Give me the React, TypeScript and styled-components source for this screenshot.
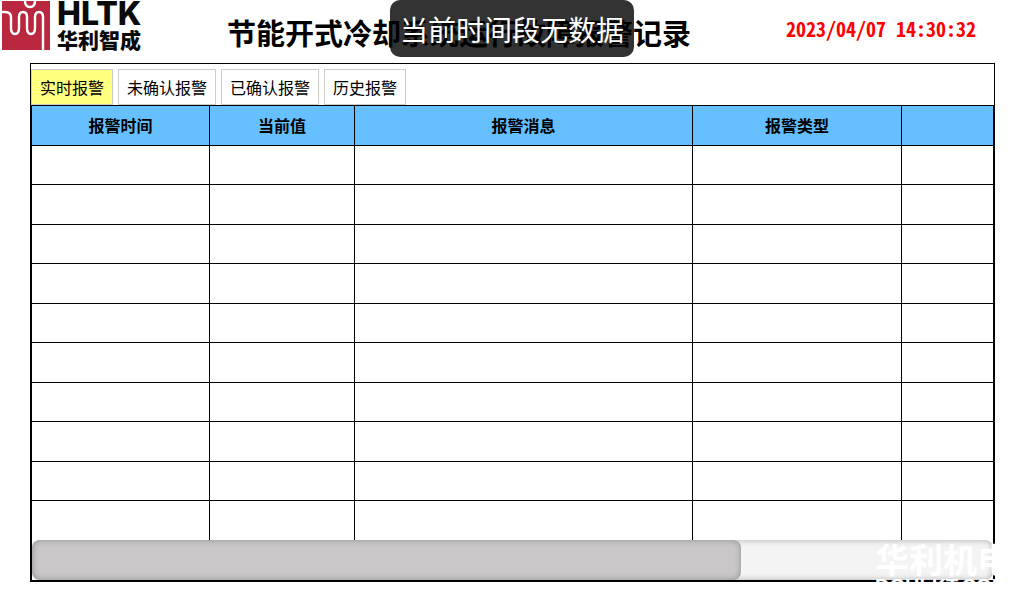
import React, { useState } from "react";
import styled, { createGlobalStyle } from "styled-components";

const GlobalStyle = createGlobalStyle`
  *, *::before, *::after { box-sizing: border-box; }
  body {
    margin: 0;
    background: #fff;
    color: #000;
    font-family: "Noto Sans CJK SC", "Noto Sans", sans-serif;
    font-size: 16px;
  }
`;

const Page = styled.div`
  position: relative;
  overflow: hidden;
  padding-bottom: 18px;
`;

const Header = styled.header`
  display: flex;
  align-items: flex-start;
  height: 63px;
`;

const Logo = styled.div`
  display: flex;
  gap: 7px;
  width: 225px;
  padding-left: 2px;
`;

const LogoText = styled.div`
  display: flex;
  flex-direction: column;
  color: #0a0a0a;
`;

const LogoLatin = styled.span`
  font: 800 32px/28px Inter, sans-serif;
`;

const LogoHan = styled.span`
  font-size: 21px;
  font-weight: 900;
  line-height: 22px;
`;

const Title = styled.h1`
  flex: 1;
  margin: 0;
  padding: 12px 0 0 2px;
  font-size: 29px;
  font-weight: 700;
  line-height: 40px;
  white-space: nowrap;
`;

const Clock = styled.time`
  padding: 14px 48px 0 0;
  color: #f00;
  font-size: 20px;
  font-weight: 700;
  font-feature-settings: "hwid";
  line-height: 30px;
  white-space: pre;
`;

const Frame = styled.main`
  margin: 0 29px 0 30px;
  border: 1px solid #000;
`;

const TabBar = styled.div`
  display: flex;
  gap: 5px;
  padding-top: 5px;
`;

const Tab = styled.button<{ $active: boolean }>`
  height: 36px;
  padding: 0 8px;
  border: 1px solid #ccc;
  border-radius: 0;
  background: ${(p) => (p.$active ? "#ffff80" : "#fff")};
  color: #000;
  font: inherit;
  line-height: 34px;
  cursor: pointer;
`;

const Panel = styled.section`
  border: 1px solid #000;
`;

const AlarmTable = styled.table`
  width: 100%;
  table-layout: fixed;
  border-collapse: separate;
  border-spacing: 0;
`;

const HeadCell = styled.th<{ $width?: number }>`
  width: ${(p) => (p.$width ? `${p.$width}px` : "auto")};
  height: 40px;
  padding: 0 0 2px;
  border-right: 1px solid #000;
  border-bottom: 1px solid #000;
  background: #66bfff;
  font-weight: 700;
  line-height: 24px;
  &:last-child { border-right: 0; }
`;

const Row = styled.tr`
  height: 39px;
  &:nth-child(even) { height: 40px; }
  &:last-child { height: 39px; }
  &:last-child td { border-bottom: 0; }
`;

const Cell = styled.td`
  padding: 0;
  border-right: 1px solid #000;
  border-bottom: 1px solid #000;
  &:last-child { border-right: 0; }
`;

const ScrollTrack = styled.div`
  height: 40px;
  border-radius: 8px;
  background: #f4f4f4;
  box-shadow: inset 0 0 6px rgba(0, 0, 0, 0.3);
`;

const ScrollThumb = styled.div`
  width: 73.8%;
  height: 40px;
  border-radius: 8px;
  background: #c9c7c8;
  box-shadow: inset 0 0 6px rgba(0, 0, 0, 0.3);
`;

const Toast = styled.div`
  position: absolute;
  top: 0;
  left: 50%;
  transform: translateX(-50%);
  padding: 9px 10px 8px;
  border-radius: 10px;
  background: rgba(0, 0, 0, 0.8);
  color: #fff;
  font-size: 28px;
  line-height: 40px;
  white-space: nowrap;
`;

const Watermark = styled.div`
  position: absolute;
  right: 0;
  bottom: 0;
  width: 149px;
  height: 60px;
  overflow: hidden;
  color: #fff;
  pointer-events: none;
  white-space: nowrap;
`;

const WatermarkName = styled.div`
  font-size: 34px;
  font-weight: 700;
  line-height: 38px;
`;

const WatermarkSite = styled.div`
  font: 700 20px/16px "Liberation Sans", sans-serif;
`;

const tabs = ["实时报警", "未确认报警", "已确认报警", "历史报警"];

const columns = [
  { label: "报警时间", width: 178 },
  { label: "当前值", width: 145 },
  { label: "报警消息", width: 338 },
  { label: "报警类型", width: 209 },
  { label: "" },
];

const rowCount = 10;

function LogoMark() {
  return (
    <svg width="48" height="50" viewBox="0 -1 48 50" aria-hidden="true">
      <rect width="48" height="49" fill="#b9283f" />
      <g fill="none" stroke="#fff" strokeWidth="2.4">
        <path d="M0 11H3Q9 11 9 16V27Q9 33 13 33Q17 33 17 27V16Q17 11 21 11Q25 11 25 16V27Q25 33 29 33Q33 33 33 27V16Q33 11 37 11Q41 11 41 16V49" />
        <path d="M23 0Q23 6 28 6Q33 6 33 0" />
      </g>
    </svg>
  );
}

export default function App() {
  const [active, setActive] = useState(0);
  return (
    <>
      <GlobalStyle />
      <Page>
        <Header>
          <Logo>
            <LogoMark />
            <LogoText>
              <LogoLatin>HLTK</LogoLatin>
              <LogoHan>华利智成</LogoHan>
            </LogoText>
          </Logo>
          <Title>节能开式冷却系统运行故障报警记录</Title>
          <Clock dateTime="2023-04-07T14:30:32">2023/04/07 14:30:32</Clock>
        </Header>
        <Frame>
          <TabBar role="tablist">
            {tabs.map((label, i) => (
              <Tab
                key={label}
                type="button"
                role="tab"
                aria-selected={i === active}
                $active={i === active}
                onClick={() => setActive(i)}
              >
                {label}
              </Tab>
            ))}
          </TabBar>
          <Panel>
            <AlarmTable>
              <thead>
                <tr>
                  {columns.map((c, i) => (
                    <HeadCell key={i} scope="col" $width={c.width}>
                      {c.label}
                    </HeadCell>
                  ))}
                </tr>
              </thead>
              <tbody>
                {Array.from({ length: rowCount }, (_, r) => (
                  <Row key={r}>
                    {columns.map((_c, i) => (
                      <Cell key={i} />
                    ))}
                  </Row>
                ))}
              </tbody>
            </AlarmTable>
            <ScrollTrack>
              <ScrollThumb />
            </ScrollTrack>
          </Panel>
        </Frame>
        <Toast role="status">当前时间段无数据</Toast>
        <Watermark>
          <WatermarkName>华利机电</WatermarkName>
          <WatermarkSite>DGHLKT.COM</WatermarkSite>
        </Watermark>
      </Page>
    </>
  );
}
